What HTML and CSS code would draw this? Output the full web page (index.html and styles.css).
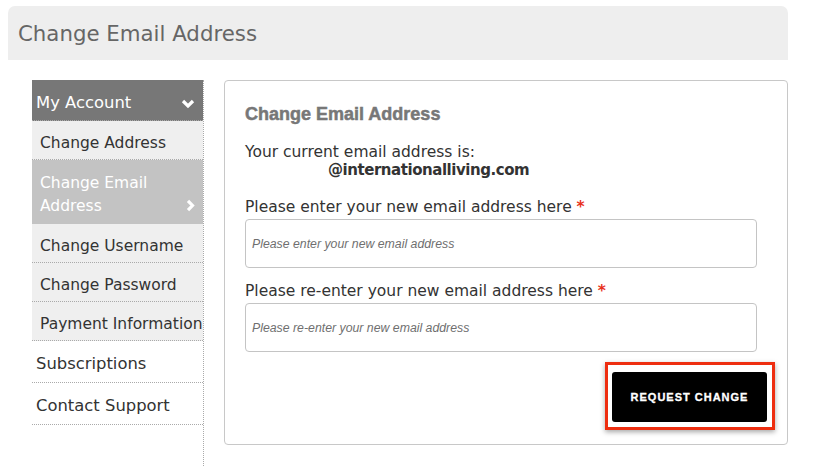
FILE: index.html
```html
<!DOCTYPE html>
<html lang="en">
<head>
    <meta charset="UTF-8">
    <meta name="viewport" content="width=device-width, initial-scale=1.0">
    <title>Change Email Address</title>
    <link rel="stylesheet" href="styles.css">
</head>
<body>
    <div class="page">
        <h1 class="page-title">Change Email Address</h1>

        <div class="account">
            <nav class="sidebar">
                <div class="nav-head">
                    <span>My Account</span>
                    <svg class="chevron-down" width="14" height="10" viewBox="0 0 14 10">
                        <polyline points="2,2 7,7 12,2" />
                    </svg>
                </div>
                <ul class="sub-nav">
                    <li><a href="#">Change Address</a></li>
                    <li class="active">
                        <a href="#">Change Email<br>Address</a>
                        <svg class="chevron-right" width="9" height="13" viewBox="0 0 9 13">
                            <polyline points="2,1.8 6.5,6.5 2,11.2" />
                        </svg>
                    </li>
                    <li><a href="#">Change Username</a></li>
                    <li><a href="#">Change Password</a></li>
                    <li><a href="#">Payment Information</a></li>
                </ul>
                <ul class="main-nav">
                    <li><a href="#">Subscriptions</a></li>
                    <li><a href="#">Contact Support</a></li>
                </ul>
            </nav>

            <section class="card">
                <h2>Change Email Address</h2>
                <p class="current">
                    Your current email address is:
                    <strong>@internationalliving.com</strong>
                </p>

                <div class="field">
                    <label for="newEmail">Please enter your new email address here <span class="req">*</span></label>
                    <input type="text" id="newEmail" placeholder="Please enter your new email address">
                </div>
                <div class="field">
                    <label for="confirmEmail">Please re-enter your new email address here <span class="req">*</span></label>
                    <input type="text" id="confirmEmail" placeholder="Please re-enter your new email address">
                </div>

                <div class="actions">
                    <div class="highlight">
                        <button id="requestBtn">REQUEST CHANGE</button>
                    </div>
                </div>
            </section>
        </div>
    </div>
</body>
</html>
```

FILE: styles.css
```css
body {
    margin: 0;
    font-family: 'DejaVu Sans', sans-serif;
    color: #333;
    background-color: white;
}
.page {
    width: 780px;
    padding: 6px 8px 0;
}
.page-title {
    margin: 0;
    height: 54px;
    padding-left: 10px;
    background-color: #eee;
    border-radius: 7px 7px 0 0;
    font-size: 21.3px;
    font-weight: normal;
    line-height: 56px;
    color: #666;
}
.account {
    display: flex;
    align-items: flex-start;
    gap: 20px;
    padding: 20px 0 0 24px;
}
.sidebar {
    width: 171px;
    min-height: 400px;
    border-right: 1px dotted #aaa;
}
.nav-head {
    display: flex;
    justify-content: space-between;
    align-items: center;
    padding: 13px 8px 7px 4px;
    background-color: #777;
    border-bottom: 1px dotted #aaa;
    color: white;
    font-size: 16.4px;
    line-height: 20px;
}
.chevron-down,
.chevron-right {
    fill: none;
    stroke: white;
    stroke-width: 3.2;
}
.chevron-down {
    margin-top: 1px;
}
.sidebar ul {
    margin: 0;
    padding: 0;
    list-style: none;
}
.sidebar a {
    color: #333;
    text-decoration: none;
}
.sub-nav li {
    padding: 12px 8px 6px;
    background-color: #efefef;
    border-bottom: 1px dotted #aaa;
    font-size: 15.5px;
    line-height: 20px;
    white-space: nowrap;
}
.sub-nav li.active {
    display: flex;
    justify-content: space-between;
    align-items: flex-end;
    padding: 12px 8px 5px 8px;
    background-color: #c3c3c3;
    border-bottom-color: #c3c3c3;
    line-height: 23px;
}
.sub-nav li.active a {
    color: white;
}
.chevron-right {
    margin-bottom: 6px;
}
.main-nav li {
    padding: 13px 4px 8px;
    border-bottom: 1px dotted #aaa;
    font-size: 16.4px;
    line-height: 20px;
}
.card {
    flex: 1;
    padding: 22px 30px 14px 20px;
    border: 1px solid #c8c8c8;
    border-radius: 4px;
}
.card h2 {
    margin: 0;
    font-family: 'Liberation Sans', Arial, sans-serif;
    font-size: 18px;
    line-height: 23px;
    color: #777;
    -webkit-text-stroke: 0.5px #777;
}
.current {
    margin: 17px 0 0;
    font-size: 15.5px;
    line-height: 18px;
}
.current strong {
    display: block;
    padding-left: 83px;
    font-size: 15px;
    letter-spacing: -0.45px;
}
.field {
    margin-top: 18px;
}
.field + .field {
    margin-top: 13px;
}
.field label {
    display: block;
    margin-bottom: 2px;
    font-size: 15.5px;
    line-height: 20px;
}
.req {
    color: #e8321c;
    font-weight: bold;
}
.field input {
    box-sizing: border-box;
    width: 100%;
    height: 49px;
    padding: 0 6px;
    border: 1px solid #c4c4c4;
    border-radius: 4px;
    font-family: 'Liberation Sans', Arial, sans-serif;
    font-size: 12.3px;
    font-style: italic;
}
.field input::placeholder {
    color: #6f6f6f;
}
.actions {
    display: flex;
    justify-content: flex-end;
    margin: 10px -18px 0 0;
}
.highlight {
    padding: 7px 5px 5px 4px;
    border: 3px solid #ee2e10;
    box-shadow: 0 2px 5px rgba(0,0,0,0.35);
}
#requestBtn {
    display: block;
    width: 155px;
    height: 50px;
    border: none;
    border-radius: 3px;
    background-color: black;
    color: white;
    font-family: 'Liberation Sans', Arial, sans-serif;
    font-size: 11px;
    font-weight: bold;
    letter-spacing: 1px;
    -webkit-text-stroke: 0.3px white;
    cursor: pointer;
}
```
